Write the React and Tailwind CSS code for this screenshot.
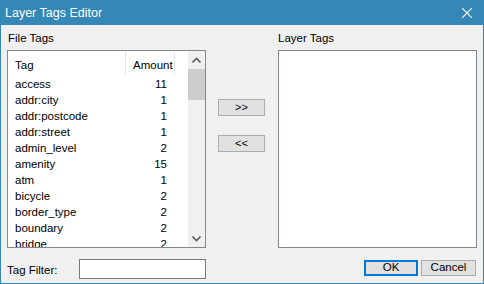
const fileTags = [
  ["access", 11],
  ["addr:city", 1],
  ["addr:postcode", 1],
  ["addr:street", 1],
  ["admin_level", 2],
  ["amenity", 15],
  ["atm", 1],
  ["bicycle", 2],
  ["border_type", 2],
  ["boundary", 2],
  ["bridge", 2],
];

function Chevron({ up }) {
  return (
    <svg width="9" height="6" viewBox="0 0 9 6" className="block">
      <path
        d={up ? "M0.5 5.5 L4.5 1.5 L8.5 5.5" : "M0.5 0.5 L4.5 4.5 L8.5 0.5"}
        fill="none"
        stroke="#606060"
        strokeWidth="1.6"
      />
    </svg>
  );
}

function WinButton({ children, className = "" }) {
  return (
    <button className={"h-[17px] bg-[#e1e1e1] border border-[#adadad] flex items-center justify-center text-[11px] leading-none text-black " + className}>
      {children}
    </button>
  );
}

export default function App() {
  return (
    <div className="w-[484px] h-[284px] bg-[#3587b5] px-[1px] pb-[1px] flex flex-col text-[11.5px] leading-[16px] text-black font-['Liberation_Sans',Arial,sans-serif]">
      <div className="h-[25px] flex items-center justify-between pl-[4px] pr-[11px] text-white text-[12.5px]">
        <span>Layer Tags Editor</span>
        <svg width="10" height="10" viewBox="0 0 10 10">
          <path d="M0 0 L10 10 M10 0 L0 10" stroke="#fff" strokeWidth="1.1" />
        </svg>
      </div>

      <div className="flex-1 bg-[#f0f0f0] px-[6px] pt-[5px] flex flex-col">
        <div className="flex">
          {/* file tags */}
          <div className="w-[199px] flex flex-col">
            <div className="h-[20px] pl-[1px]">File Tags</div>
            <div className="h-[198px] border border-[#828790] bg-white flex overflow-hidden">
              <div className="flex-1 flex flex-col overflow-hidden">
                <div className="h-[25px] flex items-center pt-[3px] shrink-0">
                  <div className="w-[117px] pl-[7px] h-full flex items-center">Tag</div>
                  <div className="w-[1px] h-[23px] bg-[#e5e5e5] self-start -mt-[2px]" />
                  <div className="w-[48px] pl-[7px] h-full flex items-center">Amount</div>
                  <div className="w-[1px] h-[23px] bg-[#e5e5e5] self-start -mt-[2px]" />
                </div>
                {fileTags.map(([tag, n]) => (
                  <div key={tag} className="h-[16px] flex shrink-0">
                    <div className="w-[117px] pl-[7px]">{tag}</div>
                    <div className="w-[42px] text-right">{n}</div>
                  </div>
                ))}
              </div>
              <div className="w-[17px] bg-[#f0f0f0] flex flex-col">
                <div className="h-[17px] flex items-center justify-center">
                  <Chevron up />
                </div>
                <div className="h-[31px] bg-[#cdcdcd] mt-[1px]" />
                <div className="flex-1" />
                <div className="h-[17px] flex items-center justify-center">
                  <Chevron />
                </div>
              </div>
            </div>
          </div>

          {/* move buttons */}
          <div className="w-[47px] ml-[12px] pt-[69px] flex flex-col">
            <WinButton>&gt;&gt;</WinButton>
            <WinButton className="mt-[19px]">&lt;&lt;</WinButton>
          </div>

          {/* layer tags */}
          <div className="w-[199px] ml-[13px] flex flex-col">
            <div className="h-[20px]">Layer Tags</div>
            <div className="h-[198px] border border-[#828790] bg-white" />
          </div>
        </div>

        <div className="mt-[11px] h-[20px] flex items-start">
          <div className="w-[72px] h-[20px] flex items-center pt-[2px]">Tag Filter:</div>
          <div className="w-[127px] h-[20px] border border-[#7a7a7a] bg-white" />
          <div className="flex-1" />
          <button className="mt-[1px] w-[54px] h-[16px] bg-[#e1e1e1] border-2 border-[#0078d7] flex items-center justify-center text-[11.5px] leading-none">
            OK
          </button>
          <button className="mt-[1px] ml-[3px] mr-[1px] w-[55px] h-[16px] bg-[#e1e1e1] border border-[#adadad] flex items-center justify-center text-[11.5px] leading-none">
            Cancel
          </button>
        </div>
      </div>
    </div>
  );
}
